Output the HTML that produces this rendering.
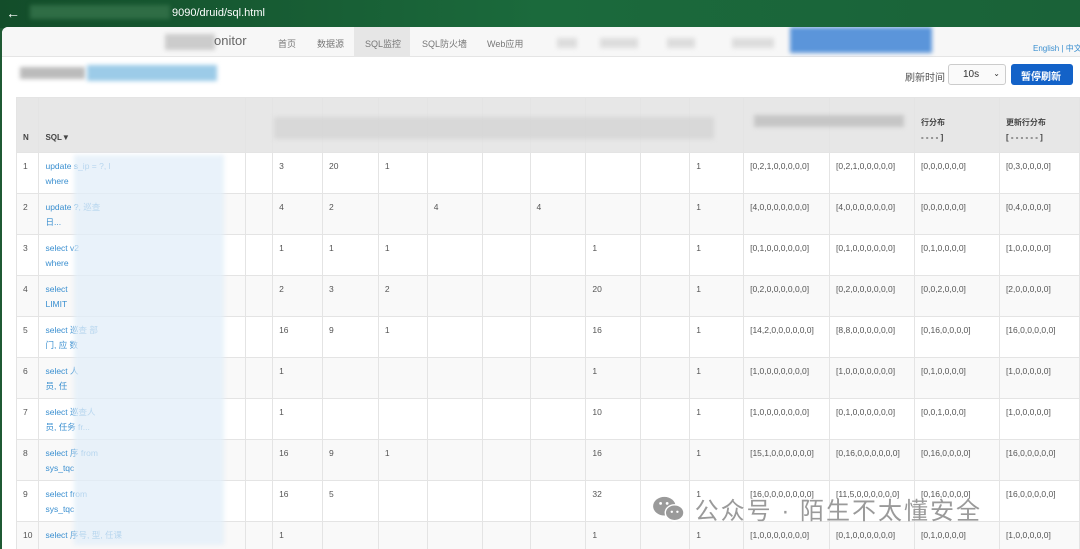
<!DOCTYPE html>
<html><head><meta charset="utf-8"><style>
*{margin:0;padding:0;box-sizing:border-box}
body{width:1080px;height:549px;overflow:hidden;background:#1f5a34;font-family:"Liberation Sans","Noto Sans CJK SC",sans-serif;position:relative}
.top{position:absolute;left:0;top:0;width:1080px;height:28px;background:linear-gradient(90deg,#134d2a,#1b6a3c 50%,#1a6238);color:#fff;font-size:11px}
.page{position:absolute;left:2px;top:27px;width:1078px;height:522px;background:#fff;border-radius:6px 0 0 0;overflow:hidden}
.nav{position:absolute;left:0;top:0;width:1078px;height:30px;background:#f7f7f7;border-bottom:1px solid #e5e5e5;font-size:9px;color:#777}
.nav span{position:absolute;top:10px;white-space:nowrap}
.blur{position:absolute;filter:blur(2px)}
table{position:absolute;left:14px;top:70px;border-collapse:collapse;table-layout:fixed;font-size:8.5px;color:#555}
td,th{border:1px solid #e4e4e4;vertical-align:top;padding:6px 6px 0;height:41px;line-height:15px;text-align:left;white-space:nowrap;overflow:hidden}
th{background:#e7e7e7;height:55px;vertical-align:bottom;font-size:8px;color:#444;padding-bottom:7px}
tr:nth-child(odd) td{background:#f9f9f9}
td.s{color:#3a8fd0}
.wm{position:absolute;left:650px;top:464px;font-size:24px;color:#9a9a9a;letter-spacing:2px;white-space:nowrap}
</style></head><body>
<div class="top"><span style="position:absolute;left:6px;top:5px;font-size:14px">←</span>
<div class="blur" style="left:30px;top:5px;width:140px;height:14px;background:#2f6d45"></div>
<span style="position:absolute;left:172px;top:7px">9090/druid/sql.html</span></div>
<div class="page">
<div class="nav">
<div class="blur" style="left:163px;top:7px;width:50px;height:16px;background:#ccc"></div>
<span style="left:212px;top:6px;font-size:13px;color:#666">onitor</span>
<span style="left:276px">首页</span><span style="left:315px">数据源</span>
<div style="position:absolute;left:352px;top:0;width:56px;height:30px;background:#e6e6e6"></div>
<span style="left:363px">SQL监控</span><span style="left:420px">SQL防火墙</span><span style="left:485px">Web应用</span>
<div class="blur" style="left:555px;top:11px;width:20px;height:10px;background:#ddd"></div>
<div class="blur" style="left:598px;top:11px;width:38px;height:10px;background:#ddd"></div>
<div class="blur" style="left:665px;top:11px;width:28px;height:10px;background:#ddd"></div>
<div class="blur" style="left:730px;top:11px;width:42px;height:10px;background:#ddd"></div>
<div class="blur" style="left:788px;top:0px;width:142px;height:26px;background:#5b95da"></div>
<span style="left:1031px;top:16px;color:#3a8fd0;font-size:8px">English | 中文</span>
</div>
<div class="blur" style="left:18px;top:40px;width:65px;height:12px;background:#bbb"></div>
<div class="blur" style="left:85px;top:38px;width:130px;height:16px;background:#9ccbe8"></div>
<span style="position:absolute;left:903px;top:42px;font-size:10px;color:#555">刷新时间</span>
<div style="position:absolute;left:946px;top:37px;width:58px;height:21px;border:1px solid #ccc;border-radius:3px;background:#fafafa;font-size:10px;padding:4px 0 0 14px;color:#333">10s<span style="position:absolute;right:5px;top:4px;font-size:8px">⌄</span></div>
<div style="position:absolute;left:1009px;top:37px;width:62px;height:21px;background:#1362c8;border-radius:3px;color:#fff;font-size:10px;font-weight:bold;padding:4px 0 0 10px">暂停刷新</div>
<table>
<colgroup><col style="width:22px"><col style="width:207px"><col style="width:27px"><col style="width:50px"><col style="width:56px"><col style="width:49px"><col style="width:55px"><col style="width:48px"><col style="width:56px"><col style="width:55px"><col style="width:49px"><col style="width:54px"><col style="width:86px"><col style="width:85px"><col style="width:85px"><col style="width:80px"></colgroup>
<tr><th>N</th><th>SQL▼</th><th></th><th></th><th></th><th></th><th></th><th></th><th></th><th></th><th></th><th></th><th></th><th></th><th>行分布<br>- - - - ]</th><th>更新行分布<br>[ - - - - - - ]</th></tr>
<tr><td>1</td><td class="s">update s_ip = ?, l<br>where</td><td></td><td>3</td><td>20</td><td>1</td><td></td><td></td><td></td><td></td><td></td><td>1</td><td>[0,2,1,0,0,0,0,0]</td><td>[0,2,1,0,0,0,0,0]</td><td>[0,0,0,0,0,0]</td><td>[0,3,0,0,0,0]</td></tr>
<tr><td>2</td><td class="s">update ?, 巡查<br>日...</td><td></td><td>4</td><td>2</td><td></td><td>4</td><td></td><td>4</td><td></td><td></td><td>1</td><td>[4,0,0,0,0,0,0,0]</td><td>[4,0,0,0,0,0,0,0]</td><td>[0,0,0,0,0,0]</td><td>[0,4,0,0,0,0]</td></tr>
<tr><td>3</td><td class="s">select v2<br>where</td><td></td><td>1</td><td>1</td><td>1</td><td></td><td></td><td></td><td>1</td><td></td><td>1</td><td>[0,1,0,0,0,0,0,0]</td><td>[0,1,0,0,0,0,0,0]</td><td>[0,1,0,0,0,0]</td><td>[1,0,0,0,0,0]</td></tr>
<tr><td>4</td><td class="s">select<br>LIMIT</td><td></td><td>2</td><td>3</td><td>2</td><td></td><td></td><td></td><td>20</td><td></td><td>1</td><td>[0,2,0,0,0,0,0,0]</td><td>[0,2,0,0,0,0,0,0]</td><td>[0,0,2,0,0,0]</td><td>[2,0,0,0,0,0]</td></tr>
<tr><td>5</td><td class="s">select 巡查 部<br>门, 应 数</td><td></td><td>16</td><td>9</td><td>1</td><td></td><td></td><td></td><td>16</td><td></td><td>1</td><td>[14,2,0,0,0,0,0,0]</td><td>[8,8,0,0,0,0,0,0]</td><td>[0,16,0,0,0,0]</td><td>[16,0,0,0,0,0]</td></tr>
<tr><td>6</td><td class="s">select 人<br>员, 任</td><td></td><td>1</td><td></td><td></td><td></td><td></td><td></td><td>1</td><td></td><td>1</td><td>[1,0,0,0,0,0,0,0]</td><td>[1,0,0,0,0,0,0,0]</td><td>[0,1,0,0,0,0]</td><td>[1,0,0,0,0,0]</td></tr>
<tr><td>7</td><td class="s">select 巡查人<br>员, 任务 fr...</td><td></td><td>1</td><td></td><td></td><td></td><td></td><td></td><td>10</td><td></td><td>1</td><td>[1,0,0,0,0,0,0,0]</td><td>[0,1,0,0,0,0,0,0]</td><td>[0,0,1,0,0,0]</td><td>[1,0,0,0,0,0]</td></tr>
<tr><td>8</td><td class="s">select 序 from<br>sys_tqc</td><td></td><td>16</td><td>9</td><td>1</td><td></td><td></td><td></td><td>16</td><td></td><td>1</td><td>[15,1,0,0,0,0,0,0]</td><td>[0,16,0,0,0,0,0,0]</td><td>[0,16,0,0,0,0]</td><td>[16,0,0,0,0,0]</td></tr>
<tr><td>9</td><td class="s">select from<br>sys_tqc</td><td></td><td>16</td><td>5</td><td></td><td></td><td></td><td></td><td>32</td><td></td><td>1</td><td>[16,0,0,0,0,0,0,0]</td><td>[11,5,0,0,0,0,0,0]</td><td>[0,16,0,0,0,0]</td><td>[16,0,0,0,0,0]</td></tr>
<tr><td>10</td><td class="s">select 序号, 型, 任课<br>...</td><td></td><td>1</td><td></td><td></td><td></td><td></td><td></td><td>1</td><td></td><td>1</td><td>[1,0,0,0,0,0,0,0]</td><td>[0,1,0,0,0,0,0,0]</td><td>[0,1,0,0,0,0]</td><td>[1,0,0,0,0,0]</td></tr>
</table>
<div class="blur" style="left:72px;top:128px;width:150px;height:390px;background:rgba(225,238,248,.75)"></div>
<div class="blur" style="left:272px;top:90px;width:440px;height:22px;background:rgba(210,210,210,.7)"></div>
<div class="blur" style="left:752px;top:88px;width:150px;height:12px;background:rgba(190,190,190,.8)"></div>
<div class="wm">
<svg width="34" height="28" viewBox="0 0 36 30" style="vertical-align:-4px"><ellipse cx="13" cy="12" rx="12" ry="10" fill="#9a9a9a"/><ellipse cx="24" cy="19" rx="10" ry="8.5" fill="#9a9a9a" stroke="#fff" stroke-width="1.5"/><circle cx="9" cy="9" r="1.5" fill="#fff"/><circle cx="16" cy="9" r="1.5" fill="#fff"/><circle cx="21" cy="18" r="1.3" fill="#fff"/><circle cx="27" cy="18" r="1.3" fill="#fff"/></svg>
公众号 · 陌生不太懂安全</div>
</div>
</body></html>
